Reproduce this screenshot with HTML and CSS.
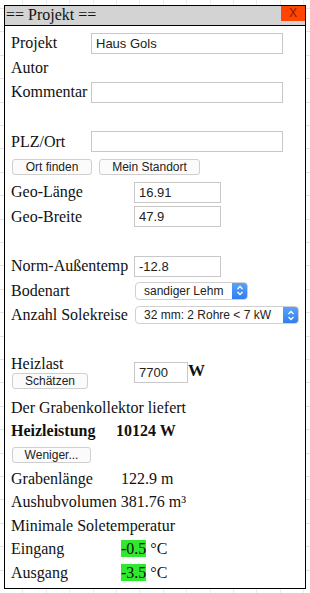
FILE: index.html
```html
<!DOCTYPE html>
<html lang="de">
<head>
    <meta charset="UTF-8">
    <meta name="viewport" content="width=device-width, initial-scale=1.0">
    <title>Projekt</title>
    <link rel="stylesheet" href="styles.css">
</head>
<body>
    <div class="panel">
        <div class="titlebar">
            <span class="title">== Projekt ==</span>
            <span class="close">X</span>
        </div>

        <div class="content">
            <!-- Projektdaten -->
            <div class="block block-project">
                <div class="row"><label>Projekt</label><input class="text wide" value="Haus Gols"></div>
                <div class="row"><label>Autor</label></div>
                <div class="row"><label>Kommentar</label><input class="text wide" value=""></div>
            </div>

            <div class="spacer"></div>

            <!-- Standort -->
            <div class="block block-project">
                <div class="row"><label>PLZ/Ort</label><input class="text wide" value=""></div>
            </div>
            <div class="buttons">
                <button class="btn btn-ort">Ort finden</button>
                <button class="btn btn-standort">Mein Standort</button>
            </div>
            <div class="block block-geo">
                <div class="row"><label>Geo-Länge</label><input class="text short" value="16.91"></div>
                <div class="row"><label>Geo-Breite</label><input class="text short" value="47.9"></div>
            </div>

            <div class="spacer"></div>

            <!-- Boden -->
            <div class="block block-geo">
                <div class="row"><label>Norm-Außentemp</label><input class="text short" value="-12.8"></div>
                <div class="row">
                    <label>Bodenart</label>
                    <div class="select select-small">
                        <select><option>sandiger Lehm</option></select>
                        <span class="knob">
                            <svg width="8" height="11" viewBox="0 0 8 11"><path d="M1.5 4 L4 1.5 L6.5 4 M1.5 7 L4 9.5 L6.5 7" fill="none" stroke="#fff" stroke-width="1.3"/></svg>
                        </span>
                    </div>
                </div>
                <div class="row">
                    <label>Anzahl Solekreise</label>
                    <div class="select select-large">
                        <select><option>32 mm: 2 Rohre &lt; 7 kW</option></select>
                        <span class="knob">
                            <svg width="8" height="11" viewBox="0 0 8 11"><path d="M1.5 4 L4 1.5 L6.5 4 M1.5 7 L4 9.5 L6.5 7" fill="none" stroke="#fff" stroke-width="1.3"/></svg>
                        </span>
                    </div>
                </div>
            </div>

            <div class="spacer spacer-small"></div>

            <!-- Heizlast -->
            <div class="heizlast">
                <div class="heizlast-left">
                    <label>Heizlast</label>
                    <button class="btn btn-schaetzen">Schätzen</button>
                </div>
                <div class="heizlast-right">
                    <input class="text tiny" value="7700"><span class="unit">W</span>
                </div>
            </div>

            <div class="line">Der Grabenkollektor liefert</div>
            <div class="line bold"><span class="col-result">Heizleistung</span>10124 W</div>
            <div class="buttons buttons-less">
                <button class="btn btn-weniger">Weniger...</button>
            </div>

            <!-- Ergebnisse -->
            <div class="line"><span class="col-value">Grabenlänge</span>122.9 m</div>
            <div class="line">Aushubvolumen 381.76 m³</div>
            <div class="line">Minimale Soletemperatur</div>
            <div class="line"><span class="col-value">Eingang</span><span class="ok">-0.5</span> °C</div>
            <div class="line"><span class="col-value">Ausgang</span><span class="ok">-3.5</span> °C</div>
        </div>
    </div>
</body>
</html>
```

FILE: styles.css
```css
body {
    margin: 0;
    padding: 0;
    font-family: "Liberation Serif", "Times New Roman", serif;
    font-size: 16px;
    color: #111;
    background-color: #fff;
    /* light grid behind the window */
    background-image:
        repeating-linear-gradient(0deg, transparent 0, transparent 22.4px, #e4e4e4 22.4px, #e4e4e4 23.4px),
        repeating-linear-gradient(90deg, transparent 0, transparent 22.4px, #ececec 22.4px, #ececec 23.4px);
    height: 593px;
    overflow: hidden;
}

.panel {
    margin: 5px 0 0 4px;
    width: 300px;
    height: 582px;
    border: 1px solid #000;
    background-color: #fff;
}

.titlebar {
    display: flex;
    justify-content: space-between;
    align-items: flex-start;
    height: 19px;
    background-color: #d3d3d3;
    border-bottom: 1px solid #000;
}

.title {
    padding-left: 1px;
    line-height: 18px;
}

.close {
    width: 24px;
    height: 15px;
    background-color: #ff4500;
    color: #8a1c00;
    font-family: "Liberation Sans", Arial, sans-serif;
    font-size: 12px;
    line-height: 14px;
    text-align: center;
}

.content {
    padding: 5px 0 0 6px;
}

.row {
    display: flex;
    align-items: center;
    height: 24.5px;
}

.block-project label {
    width: 80px;
}

.block-geo label {
    width: 123px;
}

.text {
    box-sizing: border-box;
    height: 21px;
    border: 1px solid #c8c8c8;
    padding: 0 4px;
    font-family: "Liberation Sans", Arial, sans-serif;
    font-size: 13px;
    color: #222;
    background-color: #fff;
}

.wide {
    width: 192px;
}

.short {
    width: 87px;
}

.tiny {
    width: 54px;
}

.spacer {
    height: 25px;
}

.spacer-small {
    height: 26px;
}

.buttons {
    display: flex;
    gap: 7px;
    height: 26px;
    align-items: center;
    padding-left: 1px;
}

.btn {
    height: 16px;
    padding: 0;
    border: 1px solid #cfcfcf;
    border-radius: 3px;
    background-color: #fbfbfb;
    font-family: "Liberation Sans", Arial, sans-serif;
    font-size: 12px;
    line-height: 14px;
    color: #222;
}

.btn-ort {
    width: 80px;
}

.btn-standort {
    width: 101px;
}

.btn-schaetzen {
    width: 76px;
}

.btn-weniger {
    width: 79px;
}

.select {
    display: flex;
    height: 18px;
    box-sizing: border-box;
    border: 1px solid #d0d0d0;
    border-radius: 4px;
    background-color: #fff;
    overflow: hidden;
}

.select select {
    flex: 1;
    min-width: 0;
    border: none;
    appearance: none;
    -webkit-appearance: none;
    background: transparent;
    padding: 0 0 0 8px;
    font-family: "Liberation Sans", Arial, sans-serif;
    font-size: 12px;
    color: #222;
    outline: none;
}

.select-small {
    width: 113px;
    margin-left: 1px;
}

.select-large {
    width: 164px;
    margin-left: 1px;
}

.knob {
    display: flex;
    align-items: center;
    justify-content: center;
    width: 15px;
    background: linear-gradient(#5aa2f8, #2f7ff0);
}

.heizlast {
    display: flex;
    height: 42px;
}

.heizlast-left {
    display: flex;
    flex-direction: column;
    width: 123px;
}

.heizlast-left label {
    line-height: 19px;
}

.heizlast-left .btn {
    margin-left: 1px;
}

.heizlast-right {
    display: flex;
    align-items: center;
    padding-bottom: 5px;
}

.unit {
    font-weight: bold;
    font-size: 17px;
    margin-left: 0;
    margin-top: -2px;
}

.line {
    height: 23.5px;
    line-height: 23.5px;
    white-space: nowrap;
}

.bold {
    font-weight: bold;
}

.buttons-less {
    height: 24px;
}

.col-result {
    display: inline-block;
    width: 105px;
}

.col-value {
    display: inline-block;
    width: 110px;
}

.ok {
    background-color: #2fe82f;
}
```
